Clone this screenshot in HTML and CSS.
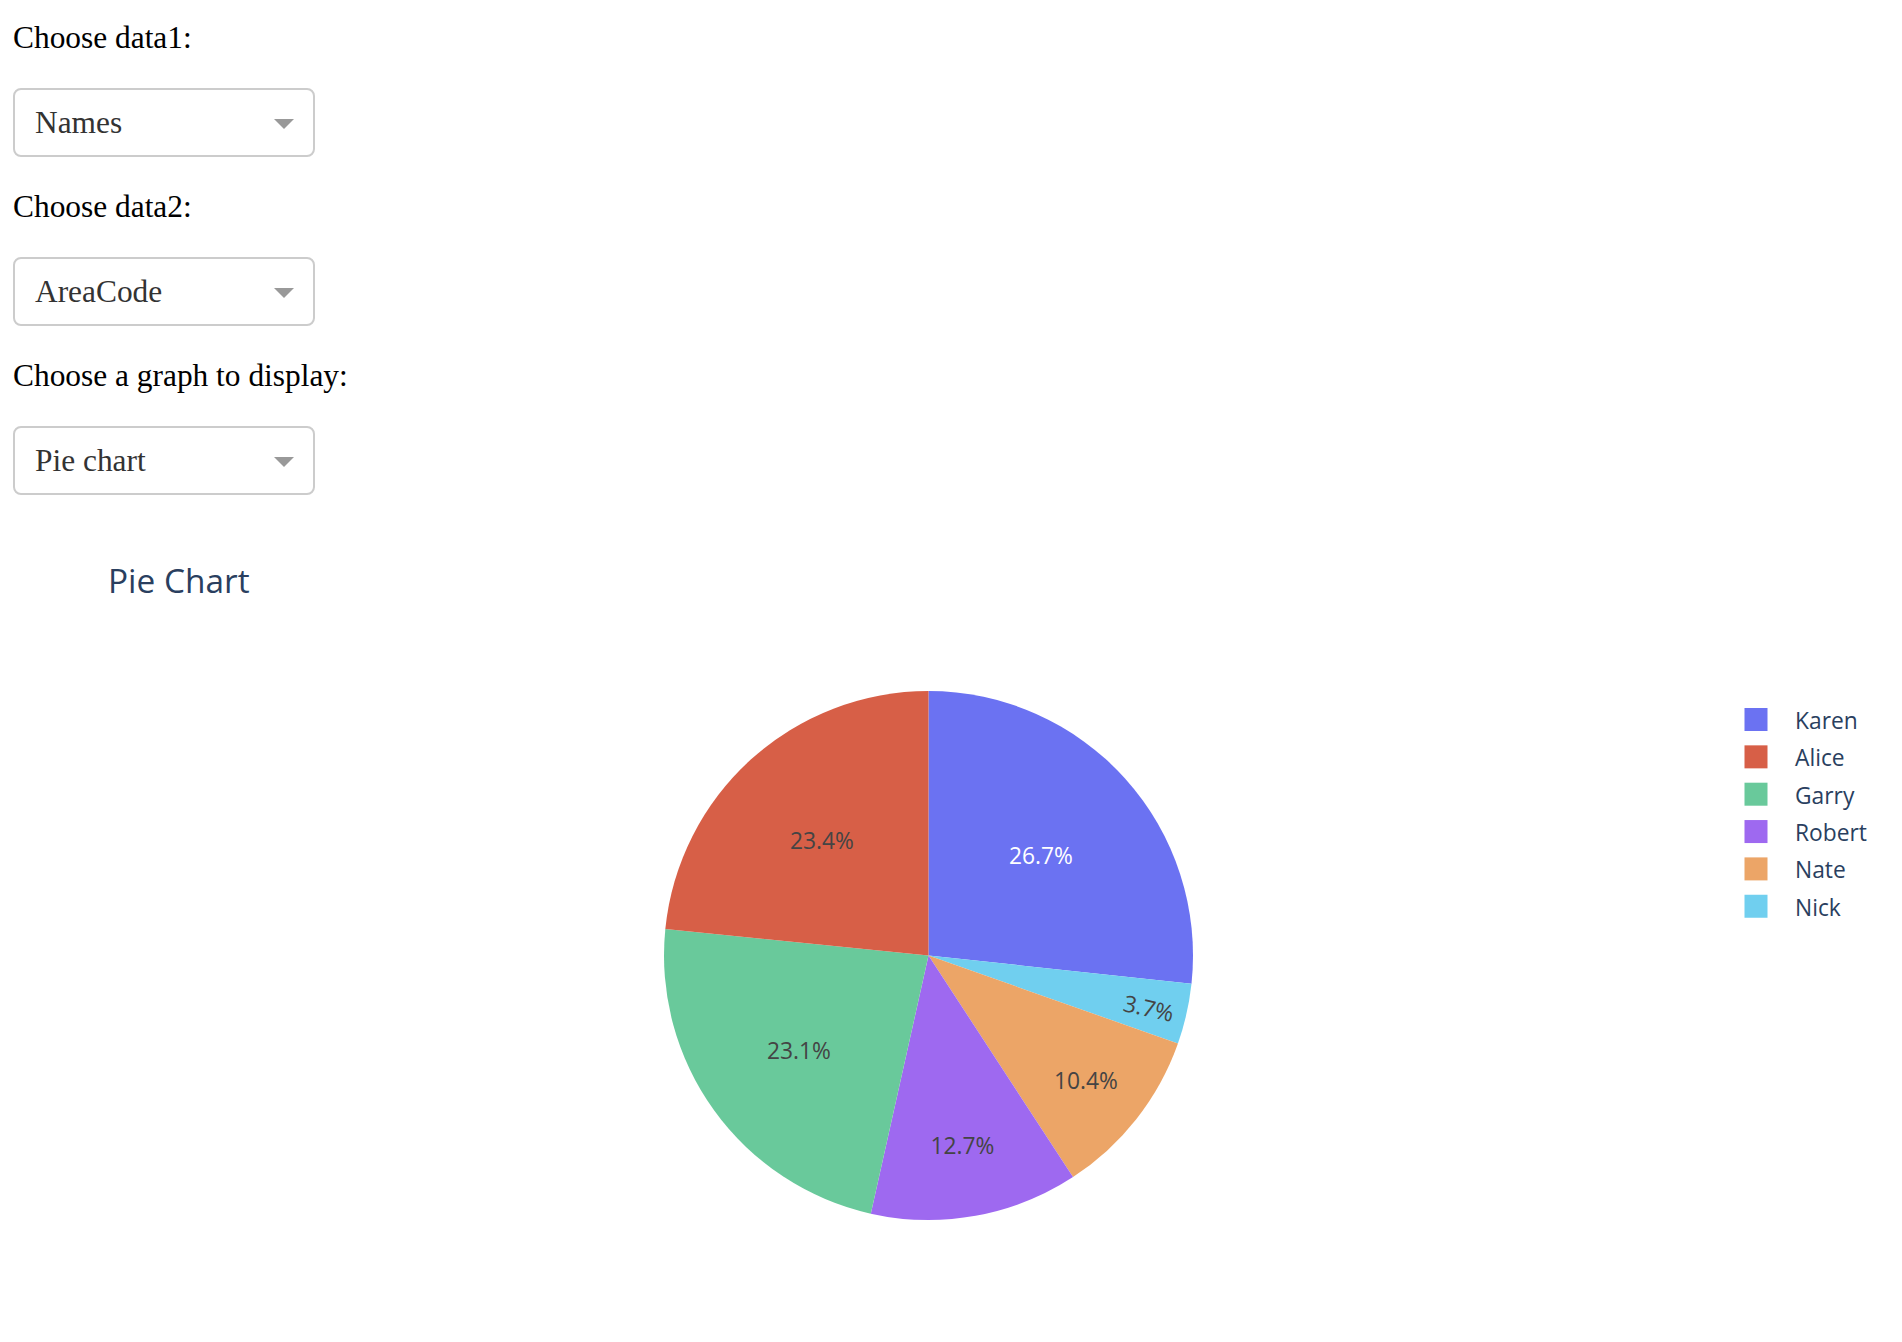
FILE: index.html
```html
<!DOCTYPE html>
<html lang="en">
<head>
    <meta charset="UTF-8">
    <meta name="viewport" content="width=device-width, initial-scale=1.0">
    <title>Dashboard</title>
    <link rel="stylesheet" href="styles.css">
</head>
<body>
<div id="page">
    <div class="controls">
        <p class="label">Choose data1:</p>
        <div class="dropdown">
            <span class="value">Names</span>
            <span class="arrow"></span>
        </div>
        <p class="label">Choose data2:</p>
        <div class="dropdown">
            <span class="value">AreaCode</span>
            <span class="arrow"></span>
        </div>
        <p class="label">Choose a graph to display:</p>
        <div class="dropdown">
            <span class="value">Pie chart</span>
            <span class="arrow"></span>
        </div>
    </div>

    <div class="graph">
        <svg class="plot" width="1902" height="800" viewBox="0 0 1902 800">
            <text class="title" x="108" y="62.5">Pie Chart</text>

            <!-- slices, clockwise from 12 o'clock -->
            <g class="slices">
                <path fill="#6b72f2" d="M928.5,425.5 L928.5,161 A264.5,264.5 0 0 1 1191.49,453.7 Z"/>
                <path fill="#70cfef" d="M928.5,425.5 L1191.49,453.7 A264.5,264.5 0 0 1 1177.92,513.53 Z"/>
                <path fill="#eca567" d="M928.5,425.5 L1177.92,513.53 A264.5,264.5 0 0 1 1073.01,647.03 Z"/>
                <path fill="#9e69f0" d="M928.5,425.5 L1073.01,647.03 A264.5,264.5 0 0 1 870.8,683.63 Z"/>
                <path fill="#69c99b" d="M928.5,425.5 L870.8,683.63 A264.5,264.5 0 0 1 665.34,398.95 Z"/>
                <path fill="#d75f47" d="M928.5,425.5 L665.34,398.95 A264.5,264.5 0 0 1 928.5,161 Z"/>
            </g>

            <g class="slicetext">
                <text class="light" x="1041" y="334">26.7%</text>
                <text x="822" y="318.5">23.4%</text>
                <text x="799" y="528.5">23.1%</text>
                <text x="962.5" y="623.5">12.7%</text>
                <text x="1086" y="559">10.4%</text>
                <text transform="translate(1148.7,478.5) rotate(12.8)" x="0" y="8">3.7%</text>
            </g>

            <g class="legend">
                <rect fill="#6b72f2" x="1744.5" y="178" width="23" height="23"/>
                <text x="1795" y="199">Karen</text>
                <rect fill="#d75f47" x="1744.5" y="215.35" width="23" height="23"/>
                <text x="1795" y="236.35">Alice</text>
                <rect fill="#69c99b" x="1744.5" y="252.7" width="23" height="23"/>
                <text x="1795" y="273.7">Garry</text>
                <rect fill="#9e69f0" x="1744.5" y="290.05" width="23" height="23"/>
                <text x="1795" y="311.05">Robert</text>
                <rect fill="#eca567" x="1744.5" y="327.4" width="23" height="23"/>
                <text x="1795" y="348.4">Nate</text>
                <rect fill="#70cfef" x="1744.5" y="364.75" width="23" height="23"/>
                <text x="1795" y="385.75">Nick</text>
            </g>
        </svg>
    </div>
</div>
</body>
</html>
```

FILE: styles.css
```css
html, body {
    margin: 0;
    padding: 0;
}

body {
    font-family: "Liberation Serif", "Times New Roman", serif;
    color: #000;
    background: #fff;
    overflow: hidden;
}

.controls {
    display: flex;
    flex-direction: column;
    align-items: flex-start;
    padding: 20px 13px 0;
}

.label {
    margin: 0 0 32px;
    font-size: 31.4px;
    line-height: 36px;
}

.dropdown {
    box-sizing: border-box;
    display: flex;
    align-items: center;
    justify-content: space-between;
    width: 302px;
    height: 69px;
    margin-bottom: 32px;
    padding: 0 19px 0 20px;
    border: 2px solid #ccc;
    border-radius: 8px;
    background: #fff;
}

.dropdown:last-child {
    margin-bottom: 0;
}

.dropdown .value {
    font-size: 31.4px;
    line-height: 36px;
    color: #333;
}

.dropdown .arrow {
    width: 0;
    height: 0;
    margin-top: 3px;
    border-style: solid;
    border-width: 10px 10px 0;
    border-color: #999 transparent transparent;
}

.graph {
    margin-top: 35px;
    width: 1902px;
    height: 800px;
    overflow: hidden;
}

.plot {
    display: block;
    font-family: "Open Sans", "Liberation Sans", sans-serif;
}

.title {
    font-size: 33.4px;
    fill: #2a3f5f;
}

.slicetext text {
    font-size: 22.8px;
    fill: #444;
    text-anchor: middle;
}

.slicetext .light {
    fill: #fff;
}

.legend text {
    font-size: 22.8px;
    fill: #2a3f5f;
}
```
